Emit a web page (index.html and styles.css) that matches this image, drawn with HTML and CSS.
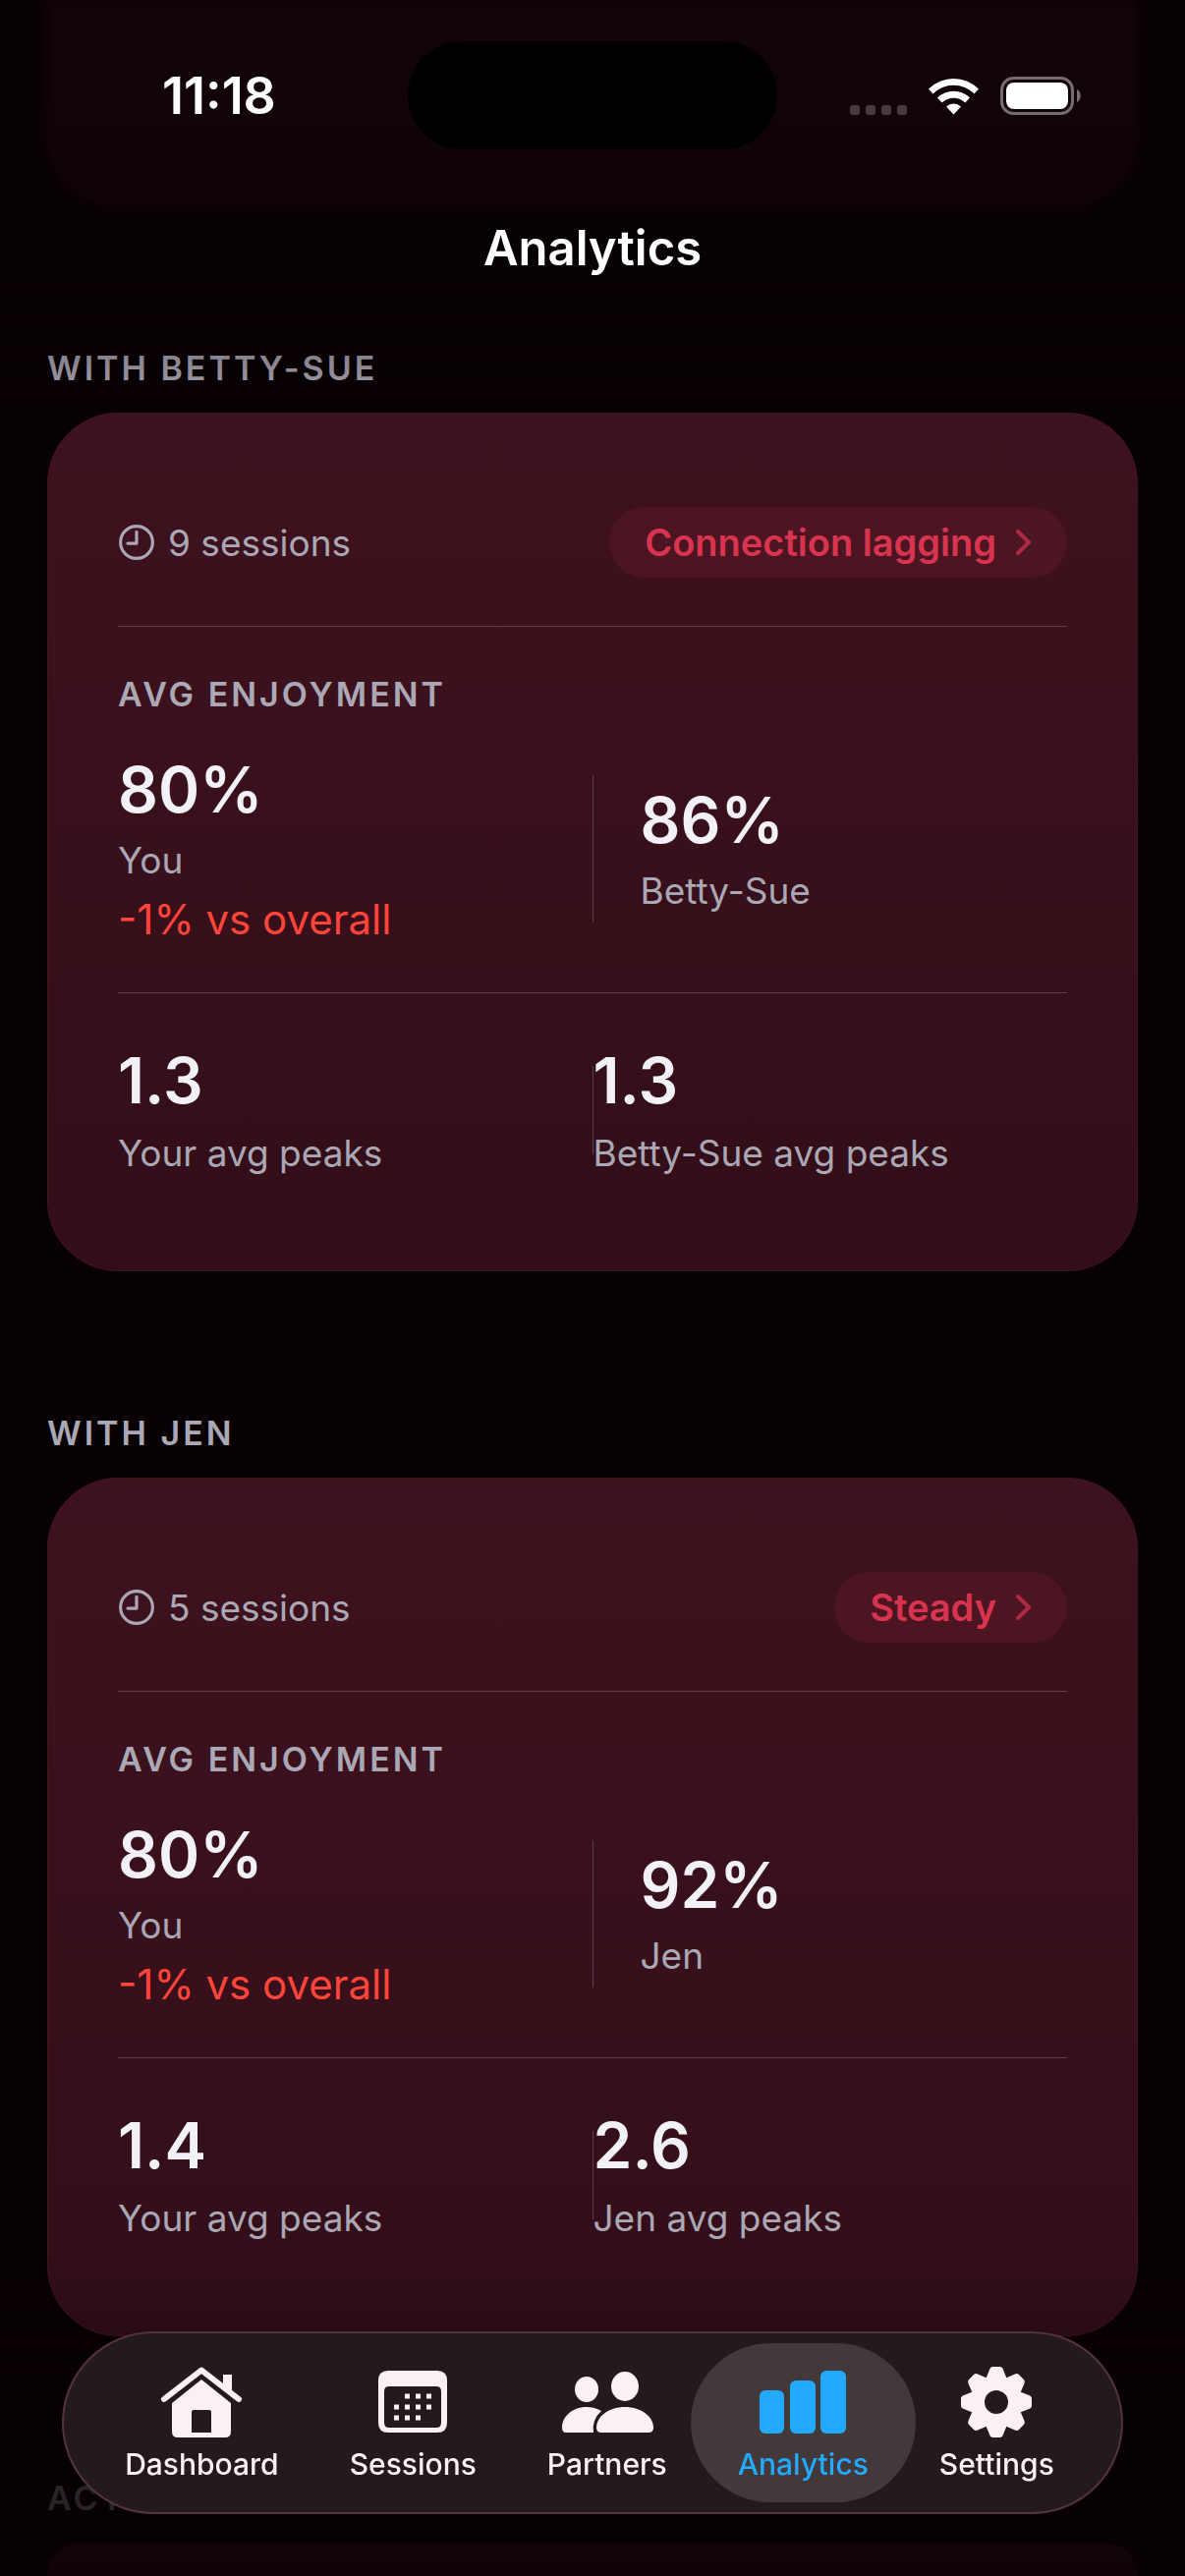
FILE: index.html
```html
<!DOCTYPE html>
<html lang="en">
<head>
    <meta charset="UTF-8">
    <meta name="viewport" content="width=device-width, initial-scale=1.0">
    <title>Analytics</title>
    <link rel="stylesheet" href="styles.css">
</head>
<body>
    <!-- Status bar and page title -->
    <header class="top-bar">
        <div class="status-bar">
            <span class="time">11:18</span>
            <div class="island"></div>
            <div class="status-icons">
                <svg class="icon-signal" viewBox="0 0 58 10" aria-hidden="true">
                    <rect x="0" width="10" height="10" rx="3"/>
                    <rect x="16" width="10" height="10" rx="3"/>
                    <rect x="32" width="10" height="10" rx="3"/>
                    <rect x="48" width="10" height="10" rx="3"/>
                </svg>
                <svg class="icon-wifi" viewBox="0 0 51 38" aria-hidden="true">
                    <path d="M0 11.500A36 36 0 0 1 51 11.500L46.500 16.500A29.500 29.500 0 0 0 4.500 16.500Z"/>
                    <path d="M9 20.500A23.500 23.500 0 0 1 42 20.500L37.300 25.500A17 17 0 0 0 13.700 25.500Z"/>
                    <path d="M18 29.500A11 11 0 0 1 33 29.500L25.500 37.500Z"/>
                </svg>
                <svg class="icon-battery" viewBox="0 0 82 39" aria-hidden="true">
                    <rect class="shell" x="1.500" y="1.500" width="72" height="36" rx="12"/>
                    <rect class="level" x="6" y="6" width="63" height="27" rx="8"/>
                    <path class="nub" d="M78 13C83 15 83 24 78 26Z"/>
                </svg>
            </div>
        </div>
        <h1>Analytics</h1>
    </header>

    <main>
        <div class="card card-above"></div>

        <section class="partner">
            <h2 class="label">WITH BETTY-SUE</h2>
            <div class="card">
                <div class="card-head">
                    <span class="sessions">
                        <svg class="icon-clock" viewBox="0 0 36 36" aria-hidden="true">
                            <circle cx="18" cy="18" r="15.500"/>
                            <path d="M18 8V19H9.500"/>
                        </svg>
                        9 sessions
                    </span>
                    <button class="pill" type="button">
                        Connection lagging
                        <svg class="icon-chevron" viewBox="0 0 16 26" aria-hidden="true"><path d="M2 2L13 13L2 24"/></svg>
                    </button>
                </div>
                <div class="enjoyment">
                    <h3 class="label">AVG ENJOYMENT</h3>
                    <div class="columns">
                        <div class="stat">
                            <span class="value">80%</span>
                            <span class="name">You</span>
                            <span class="change">-1% vs overall</span>
                        </div>
                        <div class="rule"></div>
                        <div class="stat stat-inset">
                            <span class="value">86%</span>
                            <span class="name">Betty-Sue</span>
                        </div>
                    </div>
                </div>
                <div class="columns peaks">
                    <div class="stat">
                        <span class="value">1.3</span>
                        <span class="name">Your avg peaks</span>
                    </div>
                    <div class="rule"></div>
                    <div class="stat">
                        <span class="value">1.3</span>
                        <span class="name">Betty-Sue avg peaks</span>
                    </div>
                </div>
            </div>
        </section>

        <section class="partner">
            <h2 class="label">WITH JEN</h2>
            <div class="card">
                <div class="card-head">
                    <span class="sessions">
                        <svg class="icon-clock" viewBox="0 0 36 36" aria-hidden="true">
                            <circle cx="18" cy="18" r="15.500"/>
                            <path d="M18 8V19H9.500"/>
                        </svg>
                        5 sessions
                    </span>
                    <button class="pill" type="button">
                        Steady
                        <svg class="icon-chevron" viewBox="0 0 16 26" aria-hidden="true"><path d="M2 2L13 13L2 24"/></svg>
                    </button>
                </div>
                <div class="enjoyment">
                    <h3 class="label">AVG ENJOYMENT</h3>
                    <div class="columns">
                        <div class="stat">
                            <span class="value">80%</span>
                            <span class="name">You</span>
                            <span class="change">-1% vs overall</span>
                        </div>
                        <div class="rule"></div>
                        <div class="stat stat-inset">
                            <span class="value">92%</span>
                            <span class="name">Jen</span>
                        </div>
                    </div>
                </div>
                <div class="columns peaks">
                    <div class="stat">
                        <span class="value">1.4</span>
                        <span class="name">Your avg peaks</span>
                    </div>
                    <div class="rule"></div>
                    <div class="stat">
                        <span class="value">2.6</span>
                        <span class="name">Jen avg peaks</span>
                    </div>
                </div>
            </div>
        </section>

        <section class="partner partner-last">
            <h2 class="label">ACT</h2>
            <div class="card card-below"></div>
        </section>
    </main>

    <!-- Floating tab bar -->
    <footer class="bottom-bar">
        <nav class="tabs">
            <a class="tab" href="#">
                <svg viewBox="0 0 96 72" aria-hidden="true">
                    <path class="line" d="M10 33L48 3.500L86 33"/>
                    <path d="M70 8H79V27L70 20Z"/>
                    <path d="M48 13L78 37V66Q78 72 72 72H24Q18 72 18 66V37ZM40 44Q38 44 38 46V67H58V46Q58 44 56 44Z" fill-rule="evenodd"/>
                </svg>
                Dashboard
            </a>
            <a class="tab" href="#">
                <svg viewBox="0 0 96 72" aria-hidden="true">
                    <path d="M23 4H73Q83 4 83 14V57Q83 67 73 67H23Q13 67 13 57V14Q13 4 23 4ZM24 20Q19 20 19 25V57Q19 62 24 62H72Q77 62 77 57V25Q77 20 72 20Z" fill-rule="evenodd"/>
                    <path class="dots" d="M40 30H70M29 41H70M29 52H60"/>
                </svg>
                Sessions
            </a>
            <a class="tab" href="#">
                <svg viewBox="0 0 96 72" aria-hidden="true">
                    <ellipse cx="27" cy="23" rx="12" ry="13"/>
                    <ellipse cx="66" cy="20" rx="14" ry="15"/>
                    <path d="M2 62C2 51 12 41 27 41Q35 41 42 45Q32 54 34 67H6Q2 67 2 62Z"/>
                    <path d="M37 62C37 51 49 41 66 41S95 51 95 62Q95 67 90 67H42Q37 67 37 62Z"/>
                </svg>
                Partners
            </a>
            <a class="tab active" href="#" aria-current="page">
                <svg viewBox="0 0 96 72" aria-hidden="true">
                    <rect x="4" y="24" width="25" height="44" rx="6"/>
                    <rect x="35" y="14" width="26" height="54" rx="6"/>
                    <rect x="66" y="4" width="26" height="64" rx="6"/>
                </svg>
                Analytics
            </a>
            <a class="tab" href="#">
                <svg viewBox="0 0 96 72" aria-hidden="true">
                    <defs>
                        <path id="tooth" d="M37 13L41 3Q42 0 44.500 0H51.500Q54 0 55 3L59 13Z"/>
                    </defs>
                    <circle cx="48" cy="36" r="19" class="ring"/>
                    <use href="#tooth"/>
                    <use href="#tooth" transform="rotate(45 48 36)"/>
                    <use href="#tooth" transform="rotate(90 48 36)"/>
                    <use href="#tooth" transform="rotate(135 48 36)"/>
                    <use href="#tooth" transform="rotate(180 48 36)"/>
                    <use href="#tooth" transform="rotate(225 48 36)"/>
                    <use href="#tooth" transform="rotate(270 48 36)"/>
                    <use href="#tooth" transform="rotate(315 48 36)"/>
                </svg>
                Settings
            </a>
        </nav>
    </footer>
</body>
</html>
```
FILE: styles.css
```css
* {
    box-sizing: border-box;
}

body {
    margin: 0;
    background-color: #080103;
    color: #f3f1f8;
    font-family: Inter, "Liberation Sans", sans-serif;
}

h1, h2, h3 {
    margin: 0;
}

/* Top bar */
.top-bar {
    position: fixed;
    top: 0;
    left: 0;
    right: 0;
    z-index: 1;
    height: 420px;
    background: linear-gradient(rgba(8, 1, 3, 0.8) 50%, rgba(8, 1, 3, 0));
    color: #fff;
    pointer-events: none;
}

.status-bar {
    display: grid;
    grid-template-columns: 1fr 376px 1fr;
    align-items: center;
    padding-top: 42px;
}

.time {
    padding-left: 31px;
    text-align: center;
    font-size: 52px;
    font-weight: 600;
}

.island {
    height: 110px;
    border-radius: 55px;
    background-color: #000;
}

.status-icons {
    display: flex;
    align-items: flex-end;
    justify-content: flex-end;
    gap: 22px;
    padding-right: 106px;
}

.icon-signal {
    width: 58px;
    height: 10px;
    fill: #463c3e;
}

.icon-wifi {
    width: 51px;
    height: 38px;
    fill: #fff;
}

.icon-battery {
    width: 82px;
    height: 39px;
}

.icon-battery .shell {
    fill: none;
    stroke: #746c6e;
    stroke-width: 3;
}

.icon-battery .level {
    fill: #fff;
}

.icon-battery .nub {
    fill: #746c6e;
}

h1 {
    margin-top: 71px;
    text-align: center;
    font-size: 49px;
    font-weight: 600;
    line-height: 60px;
}

/* Content */
main {
    display: flex;
    flex-direction: column;
    height: 100vh;
    padding: 0 48px;
    overflow: hidden;
}

.partner {
    padding-top: 143px;
}

.partner-last {
    display: flex;
    flex: 1;
    flex-direction: column;
}

.label {
    color: #aba8b5;
    font-size: 34px;
    font-weight: 600;
    line-height: 44px;
    letter-spacing: 3px;
}

.card {
    flex-shrink: 0;
    padding: 95px 71px;
    border: 1px solid #431320;
    border-radius: 72px;
    background: linear-gradient(#3e121e, #320e18);
}

.partner .card {
    margin-top: 23px;
}

/* Only the end of this card shows, softened under the top bar */
.card-above {
    height: 210px;
    border: 0;
    border-radius: 0 0 72px 72px;
    filter: blur(4px);
}

.card-below {
    flex: 1;
    padding: 0;
    border: 0;
    border-radius: 72px 72px 0 0;
}

.card-head {
    display: flex;
    align-items: center;
    justify-content: space-between;
    padding-bottom: 49px;
    border-bottom: 1px solid #5c4049;
}

.sessions {
    display: flex;
    align-items: center;
    gap: 13px;
    color: #aba8b5;
    font-size: 37px;
}

.icon-clock {
    width: 38px;
    height: 38px;
    fill: none;
    stroke: #aba8b5;
    stroke-width: 3;
    stroke-linecap: round;
    stroke-linejoin: round;
}

.pill {
    display: flex;
    align-items: center;
    gap: 20px;
    height: 72px;
    padding: 0 36px;
    border: 0;
    border-radius: 36px;
    background-color: #4d1422;
    color: #d8344f;
    font: inherit;
    font-size: 38px;
    font-weight: 600;
}

.icon-chevron {
    width: 16px;
    height: 26px;
    fill: none;
    stroke: #ad2b42;
    stroke-width: 4;
    stroke-linecap: round;
    stroke-linejoin: round;
}

.enjoyment {
    padding: 47px 0 48px;
    border-bottom: 1px solid #5c4049;
}

.columns {
    display: grid;
    grid-template-columns: 1fr 1px 1fr;
    align-items: center;
}

.enjoyment .columns {
    margin-top: 37px;
}

.peaks {
    padding-top: 51px;
}

.rule {
    height: 150px;
    background-color: #5c4049;
}

.peaks .rule {
    height: 90px;
}

.stat {
    display: flex;
    flex-direction: column;
    gap: 10px;
    white-space: nowrap;
}

.peaks .stat {
    gap: 12px;
}

.stat-inset {
    padding-left: 48px;
}

.value {
    font-size: 64px;
    font-weight: 600;
    line-height: 76px;
}

.name {
    color: #aba8b5;
    font-size: 37px;
    line-height: 48px;
}

.change {
    color: #ff453a;
    font-size: 42px;
    line-height: 52px;
}

/* Tab bar */
.bottom-bar {
    position: fixed;
    left: 0;
    right: 0;
    bottom: 0;
    z-index: 1;
    padding: 73px 63px 63px;
    background: linear-gradient(rgba(8, 1, 3, 0), rgba(8, 1, 3, 0.2) 24%, rgba(8, 1, 3, 0.8) 70%);
}

.tabs {
    display: flex;
    justify-content: center;
    padding: 10px 16px 10px 10px;
    border: 2px solid #55333c;
    border-radius: 93px;
    background-color: #231a1c;
}

.tab {
    display: flex;
    flex-direction: column;
    align-items: center;
    gap: 9px;
    height: 162px;
    padding: 24px 36px 0;
    color: #fbf1f4;
    font-size: 30px;
    font-weight: 500;
    line-height: 36px;
    text-decoration: none;
}

.tab svg {
    width: 96px;
    height: 72px;
    fill: currentColor;
}

.tab .line {
    fill: none;
    stroke: currentColor;
    stroke-width: 6;
    stroke-linecap: round;
    stroke-linejoin: round;
}

.tab .dots {
    fill: none;
    stroke: currentColor;
    stroke-width: 5;
    stroke-dasharray: 5 6;
}

.tab .ring {
    fill: none;
    stroke: currentColor;
    stroke-width: 14;
}

.tab.active {
    margin: 0 -12px;
    padding: 24px 48px 0;
    border-radius: 81px;
    background-color: #43383a;
    color: #22aaff;
}
```
